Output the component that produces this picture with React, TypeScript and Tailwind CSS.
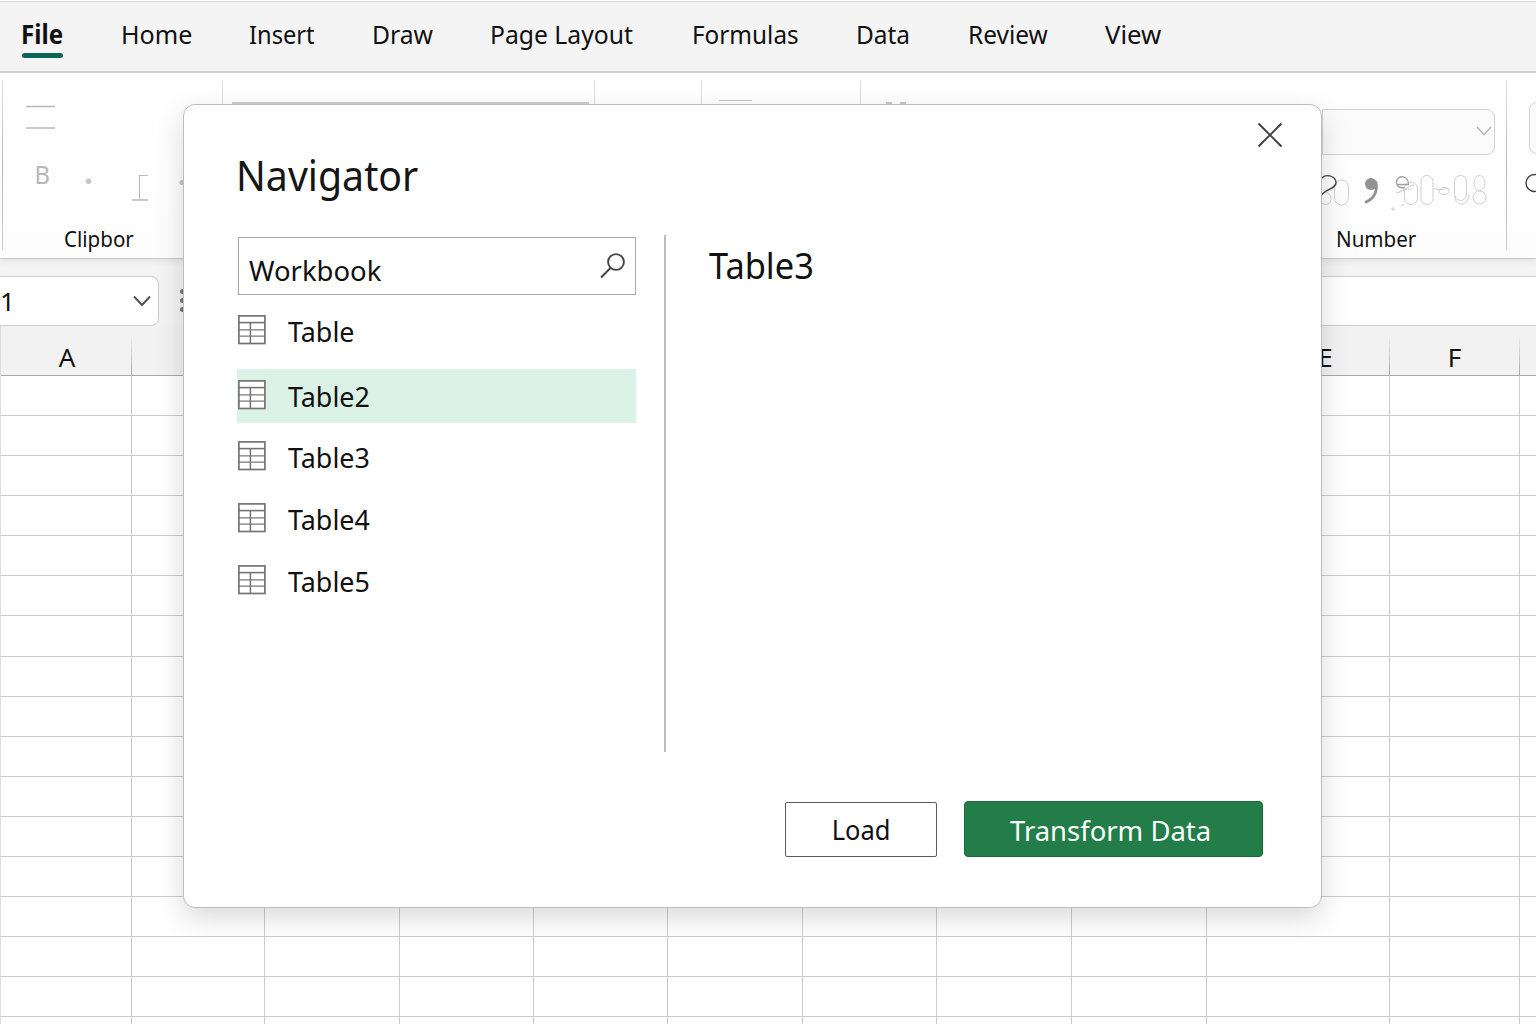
import React from "react";

const tabs = [
  { label: "File", width: "w-[99px]", text: "-ml-px font-bold scale-x-[0.93]", active: true },
  { label: "Home", width: "w-[128px]", text: "scale-x-[0.965]" },
  { label: "Insert", width: "w-[123px]", text: "scale-x-[0.91]" },
  { label: "Draw", width: "w-[118px]", text: "scale-x-[0.95]" },
  { label: "Page Layout", width: "w-[202px]", text: "scale-x-[0.95]" },
  { label: "Formulas", width: "w-[164px]", text: "scale-x-[0.935]" },
  { label: "Data", width: "w-[112px]", text: "scale-x-[0.94]" },
  { label: "Review", width: "w-[137px]", text: "scale-x-[0.94]" },
  { label: "View", width: "w-[80px]", text: "scale-x-[0.99]" },
];

const columns = ["A", "", "", "", "", "", "", "", "", "E", "F", ""];
const gridCols =
  "grid grid-cols-[132px_133px_135px_134px_134px_135px_134px_135px_135px_183px_130px_16px]";

const tables = [
  { name: "Table", row: "mt-[9px]" },
  { name: "Table2", row: "mt-[11px] bg-[#dbf2e7]" },
  { name: "Table3", row: "mt-[7px]" },
  { name: "Table4", row: "mt-2" },
  { name: "Table5", row: "mt-2" },
];

function TableIcon() {
  return (
    <svg width="28" height="30" viewBox="0 0 28 30" fill="none" className="mb-[2px] shrink-0">
      <rect x="0.9" y="0.9" width="26" height="27.6" fill="#fff" stroke="#747474" strokeWidth="1.7" />
      <path d="M1 7.6h26" stroke="#747474" strokeWidth="1.6" />
      <path d="M12.4 8v20" stroke="#747474" strokeWidth="1.5" />
      <path d="M1 14.9h26M1 21.2h26" stroke="#7a7a7a" strokeWidth="1.3" />
    </svg>
  );
}

function MenuBar() {
  return (
    <nav className="flex h-[73px] shrink-0 border-b-2 border-[#d0d2d1] bg-[#f4f4f4] pl-[22px] shadow-[inset_0_1px_0_#fff,inset_0_2px_0_#d4d6d5]">
      {tabs.map((tab) => (
        <div key={tab.label} className={`pt-[17px] ${tab.width}`}>
          <span className={`block origin-left text-[26px] leading-[34px] whitespace-nowrap ${tab.text}`}>
            {tab.label}
          </span>
          {tab.active && <div className="mt-[2px] h-[5px] w-[41px] rounded-full bg-[#0c6653]" />}
        </div>
      ))}
    </nav>
  );
}

function RibbonDivider({ height }: { height: string }) {
  return <div className={`w-px shrink-0 bg-linear-to-b from-[#e4e4e4] via-[#b8b8b8] to-[#cfcfcf] ${height}`} />;
}

function Ribbon() {
  return (
    <section className="z-10 flex h-[186px] shrink-0 border-b border-[#c9c9c9] bg-linear-to-b from-white to-[#fdfdfd] pt-[7px] shadow-[0_2px_6px_rgba(0,0,0,0.07)]">
      {/* Clipboard */}
      <div className="flex w-[222px] pl-[2px]">
        <RibbonDivider height="h-[170px]" />
        <div className="flex flex-col">
          <svg width="182" height="140" viewBox="3 80 182 140" fill="none" stroke="#b9b9b9">
            <path d="M26 106.5h29M26 128h29" strokeWidth="1.6" />
            <text x="34.5" y="184" fontSize="26" fill="#b8b8b8" stroke="none" textLength="15.5" lengthAdjust="spacingAndGlyphs">
              B
            </text>
            <circle cx="88.5" cy="181.3" r="2.7" fill="#c4c4c4" stroke="none" />
            <path d="M148 175.5h-8.5v24" strokeWidth="1.1" />
            <path d="M132 200h16" strokeWidth="1.5" />
            <circle cx="182" cy="182.5" r="2.5" fill="#c4c4c4" stroke="none" />
          </svg>
          <span className="ml-[61px] origin-left scale-x-[0.935] text-[22px] leading-[36px]">Clipbor</span>
        </div>
      </div>
      <RibbonDivider height="h-[170px]" />
      {/* Font */}
      <div className="w-[371px] pt-[22px] pl-[9px]">
        <div className="h-[3px] w-[357px] bg-[#cdcdcd]" />
      </div>
      <RibbonDivider height="h-[170px]" />
      <div className="w-[106px]" />
      <RibbonDivider height="h-[170px]" />
      {/* Alignment */}
      <div className="w-[158px] pt-5 pl-[17px]">
        <div className="h-px w-[33px] bg-[#c4c4c4]" />
      </div>
      <RibbonDivider height="h-[170px]" />
      <div className="flex w-[461px] gap-2 pt-[22px] pl-[25px]">
        <div className="h-2 w-[6px] bg-[#c8c8c8]" />
        <div className="h-2 w-[6px] bg-[#c8c8c8]" />
      </div>
      {/* Number */}
      <div className="flex w-[184px] flex-col pt-[29px]">
        <div className="flex h-[46px] w-[173px] items-center justify-end rounded-r-lg border border-[#d3d3d3] bg-[#fbfbfb] pr-[2px] pb-[2px]">
          <svg width="16" height="10" viewBox="0 0 16 10" fill="none" stroke="#b5b5b5" strokeWidth="1.4">
            <path d="M1 1l7 7.5 7-7.5" />
          </svg>
        </div>
        <svg width="184" height="65" viewBox="1322 155 184 65" fill="none">
          <g stroke="#d0d0d0" strokeWidth="1">
            <rect x="1334.5" y="180" width="14" height="25" rx="7" />
            <path d="M1322 203c4 3 9 1 9-4 0-4-3-7-7-7" />
            <rect x="1404.5" y="182" width="13" height="22.5" rx="6.5" />
            <rect x="1421" y="175.5" width="12" height="29" rx="6" />
            <rect x="1454.5" y="175.5" width="12" height="25" rx="6" />
            <path d="M1455 196c0 11 13 11 14-1" />
            <ellipse cx="1479.5" cy="183" rx="5.5" ry="7.5" />
            <circle cx="1479.5" cy="197.5" r="6.5" />
            <ellipse cx="1444" cy="191" rx="5" ry="3.5" />
            <path d="M1434 188l5 2 10-2M1396 193c6 0 7-5 18-8M1399 192c5-3 9-3 13-3" />
            <path d="M1391 209h4M1393 207v4M1401 206l3-2" />
          </g>
          <path d="M1322 178c3-4 13-3 14 4 1 7-12 7-15 14" stroke="#4a4a4a" strokeWidth="1.4" />
          <path d="M1396.5 184.500h12c0-10-12-10-12-2 0 4 4 6 8 5" stroke="#a0a0a0" strokeWidth="1.3" />
          <circle cx="1371" cy="184" r="6" fill="#929292" />
          <path d="M1376 182.5c1.500 9-1 15.500-10 19.500" stroke="#929292" strokeWidth="2.8" strokeLinecap="round" />
        </svg>
        <span className="ml-[14px] origin-left scale-x-[0.935] text-[22px] leading-[36px]">Number</span>
      </div>
      <RibbonDivider height="h-[170px]" />
      <div className="flex-1 overflow-hidden pt-[22px] pl-[22px]">
        <div className="h-[52px] w-10 rounded-lg border border-[#d3d3d3] bg-[#fbfbfb]" />
        <svg width="14" height="24" viewBox="0 0 14 24" fill="none" stroke="#444" strokeWidth="1.4" className="-ml-1 mt-[17px]">
          <circle cx="9.5" cy="12" r="8.5" />
        </svg>
      </div>
    </section>
  );
}

function FormulaBar() {
  return (
    <section className="flex h-[67px] shrink-0 items-end bg-[#f3f3f3]">
      <div className="flex h-[50px] w-[159px] items-center justify-between rounded-r-lg border border-l-0 border-[#cccccc] bg-white pr-[7px]">
        <span className="text-[26px] leading-[34px]">1</span>
        <svg width="18" height="12" viewBox="0 0 18 12" fill="none" stroke="#555" strokeWidth="2">
          <path d="M1 1.5l8 8.5 8-8.5" />
        </svg>
      </div>
      <div className="mb-[14px] ml-[21px] flex flex-col gap-1">
        <div className="size-[5px] rounded-full bg-[#777]" />
        <div className="size-[5px] rounded-full bg-[#777]" />
        <div className="size-[5px] rounded-full bg-[#777]" />
      </div>
      <div className="ml-8 h-[50px] flex-1 border-y border-[#cccccc] bg-white" />
    </section>
  );
}

function Sheet() {
  return (
    <section className="flex-1 overflow-hidden border-l border-[#dcdcdc] bg-white">
      <div className={`-ml-px h-[50px] border-b border-[#a9a9a9] bg-[#f2f2f2] ${gridCols}`}>
        {columns.map((name, i) => (
          <div key={i} className="flex justify-between">
            <span
              className={`w-full pt-[14px] text-center text-[26px] leading-[34px] ${name === "E" ? "pl-[55px]" : name === "A" ? "pl-[3px]" : ""}`}
            >
              {name}
            </span>
            {i < columns.length - 1 && (
              <div className="mt-2 w-px shrink-0 bg-linear-to-b from-[#f2f2f2] to-[#a9a9a9]" />
            )}
          </div>
        ))}
      </div>
      {Array.from({ length: 17 }, (_, row) => (
        <div key={row} className={`-ml-px h-[40.08px] border-b border-[#cbcbcb] ${gridCols}`}>
          {columns.map((_name, i) => (
            <div key={i} className="border-r border-[#cbcbcb] last:border-r-0" />
          ))}
        </div>
      ))}
    </section>
  );
}

function Navigator() {
  return (
    <div className="absolute top-[104px] left-[183px] z-20 flex h-[804px] w-[1139px] flex-col rounded-[12px] border-[1.5px] border-[#bcbebd] bg-white shadow-[0_10px_28px_rgba(0,0,0,0.15)]">
      {/* Title */}
      <header className="flex h-[130px] shrink-0 justify-between pr-[38px] pl-[52px]">
        <h1 className="origin-left scale-x-[0.935] pt-[42px] text-[42px] leading-[56px] text-[#151515]">Navigator</h1>
        <svg width="26" height="26" viewBox="0 0 26 26" stroke="#3d3d3d" strokeWidth="1.9" className="mt-[17px]">
          <path d="M1.5 1.5l23 23M24.5 1.5l-23 23" />
        </svg>
      </header>
      <div className="flex h-[517px] shrink-0 pl-[53px]">
        {/* Table list */}
        <div className="w-[399px] pt-[2px]">
          <div className="ml-px flex h-[58px] items-center justify-between border-[1.5px] border-[#a8a8a8] pr-[9px] pl-[10px]">
            <span className="origin-left scale-x-[0.98] pt-[7px] text-[28px] leading-[34px]">Workbook</span>
            <svg width="27" height="28" viewBox="0 0 27 28" fill="none" stroke="#444" strokeWidth="1.9">
              <circle cx="17" cy="10" r="7.9" />
              <path d="M11.5 16L2 25.5" />
            </svg>
          </div>
          <ul>
            {tables.map((table) => (
              <li key={table.name} className={`flex h-[54px] items-center pl-px ${table.row}`}>
                <TableIcon />
                <span className="ml-[22px] origin-left scale-x-[0.96] text-[28px] leading-[34px]">{table.name}</span>
              </li>
            ))}
          </ul>
        </div>
        <div className="ml-7 w-[2px] bg-[#bdbdbd]" />
        {/* Preview */}
        <h2 className="ml-[43px] origin-left scale-x-[0.93] pt-[7px] text-[37px] leading-[46px]">Table3</h2>
      </div>
      <footer className="flex items-end justify-end gap-[27px] pt-[49px] pr-[58px]">
        <button className="h-[55px] w-[152px] rounded-[2px] border-[1.5px] border-[#5c5c5c] pt-px text-[27px] leading-[34px]">
          <span className="inline-block scale-x-[0.945]">Load</span>
        </button>
        <button className="h-[56px] w-[299px] rounded-[4px] border border-[#156c36] bg-[#227d48] pt-[2px] pr-[6px] text-[28px] leading-[34px] text-white">
          <span className="inline-block scale-x-[0.98]">Transform Data</span>
        </button>
      </footer>
    </div>
  );
}

export default function App() {
  return (
    <div className="relative flex h-[1024px] w-[1536px] flex-col overflow-hidden bg-white font-['Noto_Sans',sans-serif] text-[#111]">
      <MenuBar />
      <Ribbon />
      <FormulaBar />
      <Sheet />
      <Navigator />
    </div>
  );
}
